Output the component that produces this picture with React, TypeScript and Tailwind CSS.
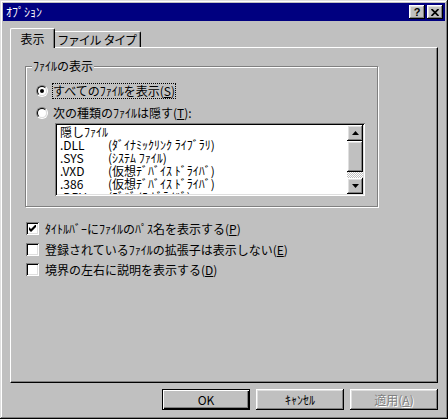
import React from "react";

const RAISED =
  "shadow-[inset_-1px_-1px_0_#000,inset_1px_1px_0_#fff,inset_-2px_-2px_0_#808080,inset_2px_2px_0_#dfdfdf]";
const SUNKEN =
  "shadow-[inset_1px_1px_0_#808080,inset_-1px_-1px_0_#fff,inset_2px_2px_0_#000,inset_-2px_-2px_0_#dfdfdf]";

function Mn({ c }: { c: string }) {
  return <span className="underline underline-offset-[1px]">{c}</span>;
}

function Radio({ checked }: { checked?: boolean }) {
  return (
    <div className="w-[12px] h-[12px] shrink-0 rounded-full border border-t-[#808080] border-l-[#808080] border-b-white border-r-white">
      <div className="w-full h-full rounded-full border border-t-black border-l-black border-b-[#dfdfdf] border-r-[#dfdfdf] bg-white flex items-center justify-center">
        {checked && <div className="w-[4px] h-[4px] rounded-full bg-black" />}
      </div>
    </div>
  );
}

function Check({ checked }: { checked?: boolean }) {
  return (
    <div className={`w-[13px] h-[13px] shrink-0 bg-white flex items-center justify-center ${SUNKEN}`}>
      {checked && (
        <svg width="7" height="7" viewBox="0 0 7 7">
          <path d="M0 2 L2 4 L7 -1 L7 2 L2 7 L0 5 Z" fill="#000" />
        </svg>
      )}
    </div>
  );
}

function Arrow({ up }: { up?: boolean }) {
  return (
    <div className={`w-[16px] h-[16px] bg-[#c0c0c0] flex items-center justify-center ${RAISED}`}>
      <svg width="7" height="4" viewBox="0 0 7 4">
        {up ? (
          <path d="M3.5 0 L7 4 L0 4 Z" fill="#000" />
        ) : (
          <path d="M0 0 L7 0 L3.5 4 Z" fill="#000" />
        )}
      </svg>
    </div>
  );
}

const rows: [string, string][] = [
  [".DLL", "(ﾀﾞｲﾅﾐｯｸﾘﾝｸ ﾗｲﾌﾞﾗﾘ)"],
  [".SYS", "(ｼｽﾃﾑ ﾌｧｲﾙ)"],
  [".VXD", "(仮想ﾃﾞﾊﾞｲｽ ﾄﾞﾗｲﾊﾞ)"],
  [".386", "(仮想ﾃﾞﾊﾞｲｽ ﾄﾞﾗｲﾊﾞ)"],
  [".DRV", "(ﾃﾞﾊﾞｲｽ ﾄﾞﾗｲﾊﾞ)"],
];

export default function App() {
  return (
    <div
      className="w-[448px] h-[419px] bg-[#c0c0c0] p-[3px] flex flex-col font-['Noto_Sans_CJK_JP',sans-serif] text-[12px] text-black shadow-[inset_-1px_-1px_0_#000,inset_1px_1px_0_#dfdfdf,inset_-2px_-2px_0_#808080,inset_2px_2px_0_#fff]"
    >
      {/* Title bar */}
      <div className="h-[18px] shrink-0 bg-[#000080] flex items-center pl-[3px] pr-[2px]">
        <span className="text-white leading-none">ｵﾌﾟｼｮﾝ</span>
        <div className="ml-auto flex gap-[2px]">
          <div className={`w-[16px] h-[14px] bg-[#c0c0c0] flex items-center justify-center ${RAISED}`}>
            <span className="font-['Liberation_Sans',sans-serif] font-bold text-[11px] leading-none">?</span>
          </div>
          <div className={`w-[16px] h-[14px] bg-[#c0c0c0] flex items-center justify-center ${RAISED}`}>
            <svg width="8" height="7" viewBox="0 0 8 7">
              <path d="M0.5 0 L7.5 7 M7.5 0 L0.5 7" stroke="#000" strokeWidth="1.7" />
            </svg>
          </div>
        </div>
      </div>

      {/* Tabs + panel */}
      <div className="mt-[7px] mx-[7px] flex flex-col">
        <div className="h-[19px] flex items-end">
          <div className="relative z-10 w-[45px] h-[20px] -mb-px bg-[#c0c0c0] border-l border-t border-r border-l-white border-t-white border-r-black rounded-tl-[2px] rounded-tr-[2px] shadow-[inset_-1px_0_0_#808080] flex items-center justify-center pt-[1px] leading-none">
            表示
          </div>
          <div className="w-[86px] h-[16px] border-t border-r border-t-white border-r-black rounded-tr-[2px] shadow-[inset_-1px_0_0_#808080] flex items-center justify-center gap-[3px] tracking-[-1.2px] leading-none pr-[2px]">
            <span>ファイル</span>
            <span>タイプ</span>
          </div>
        </div>
        <div className="h-[336px] border border-l-white border-t-white border-r-black border-b-black shadow-[inset_-1px_-1px_0_#808080] pl-[14px] flex flex-col">
          {/* Group box */}
          <div className="relative mt-[18px] w-[353px] border border-[#808080] shadow-[inset_1px_1px_0_#fff,1px_1px_0_#fff] pl-[10px] pt-[16px] pb-[10px] flex flex-col">
            <span className="absolute left-[6px] top-[-8px] px-[1px] bg-[#c0c0c0] leading-[14px]">ﾌｧｲﾙの表示</span>
            <div className="h-[16px] flex items-center">
              <Radio checked />
              <span className="ml-[4px] h-[16px] border border-dotted border-black flex items-center leading-[14px]">
                すべてのﾌｧｲﾙを表示(<Mn c="S" />)
              </span>
            </div>
            <div className="mt-[6px] h-[16px] flex items-center">
              <Radio />
              <span className="ml-[5px] leading-[14px]">
                次の種類のﾌｧｲﾙは隠す(<Mn c="T" />):
              </span>
            </div>
            <div className={`mt-[2px] ml-[19px] w-[310px] h-[73px] bg-white p-[2px] flex ${SUNKEN}`}>
              <div className="flex-1 overflow-hidden pl-[3px] leading-[13px] flex flex-col">
                <div className="h-[13px] shrink-0 whitespace-nowrap">隠しﾌｧｲﾙ</div>
                {rows.map(([a, b]) => (
                  <div key={a} className="h-[13px] shrink-0 flex whitespace-nowrap">
                    <span className="w-[48px]">{a}</span>
                    <span>{b}</span>
                  </div>
                ))}
              </div>
              <div className="w-[16px] flex flex-col">
                <Arrow up />
                <div className={`h-[31px] bg-[#c0c0c0] ${RAISED}`} />
                <div className="flex-1 bg-[image:repeating-conic-gradient(#fff_0_25%,#c0c0c0_0_50%)] bg-[length:2px_2px]" />
                <Arrow />
              </div>
            </div>
          </div>

          {/* Checkboxes */}
          <div className="mt-[15px] ml-[1px] h-[13px] flex items-center gap-[6px]">
            <Check checked />
            <span className="leading-[13px] whitespace-nowrap">
              ﾀｲﾄﾙﾊﾞｰにﾌｧｲﾙのﾊﾟｽ名を表示する(<Mn c="P" />)
            </span>
          </div>
          <div className="mt-[8px] ml-[1px] h-[13px] flex items-center gap-[6px]">
            <Check />
            <span className="leading-[13px] whitespace-nowrap">
              登録されているﾌｧｲﾙの拡張子は表示しない(<Mn c="E" />)
            </span>
          </div>
          <div className="mt-[7px] ml-[1px] h-[13px] flex items-center gap-[6px]">
            <Check />
            <span className="leading-[13px] whitespace-nowrap">
              境界の左右に説明を表示する(<Mn c="D" />)
            </span>
          </div>
        </div>
      </div>

      {/* Buttons */}
      <div className="mt-[6px] mx-[7px] flex justify-end gap-[6px]">
        <div className="w-[88px] h-[21px] border border-black bg-[#c0c0c0] shadow-[inset_1px_1px_0_#fff,inset_-1px_-1px_0_#000,inset_-2px_-2px_0_#808080] flex items-center justify-center leading-none">
          OK
        </div>
        <div className={`w-[88px] h-[21px] bg-[#c0c0c0] flex items-center justify-center leading-none ${RAISED}`}>
          ｷｬﾝｾﾙ
        </div>
        <div className={`w-[88px] h-[21px] bg-[#c0c0c0] flex items-center justify-center leading-none text-[#808080] [text-shadow:1px_1px_0_#fff] ${RAISED}`}>
          適用(<Mn c="A" />)
        </div>
      </div>
    </div>
  );
}
